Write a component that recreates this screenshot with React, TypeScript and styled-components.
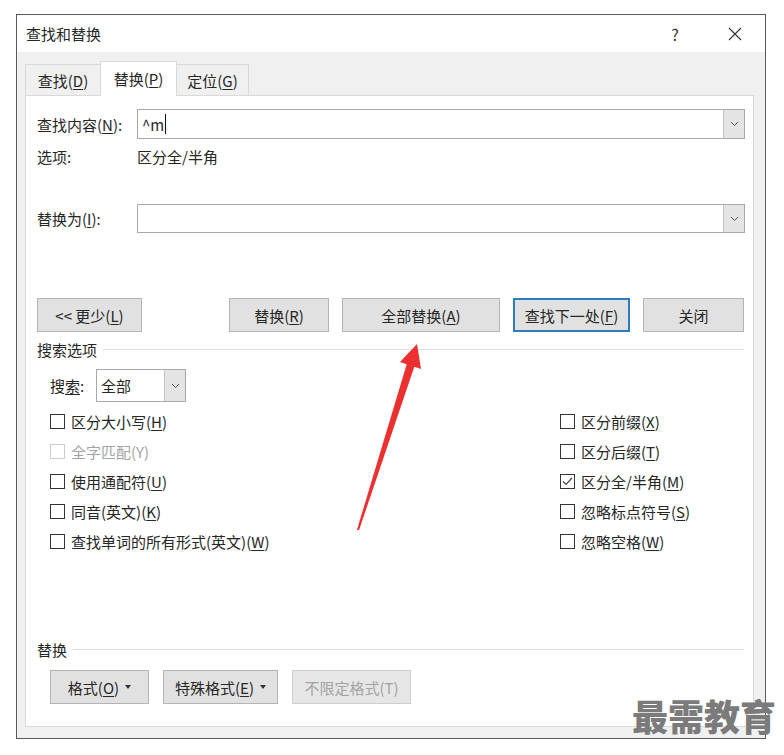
import React from "react";
import styled, { createGlobalStyle } from "styled-components";

const GlobalStyle = createGlobalStyle`
  html, body {
    margin: 0;
    padding: 0;
    background: #ffffff;
  }
  body {
    font-family: "Noto Sans CJK SC", "Noto Sans", sans-serif;
    color: #262626;
    font-size: 15px;
  }
  u {
    text-underline-offset: 2px;
  }
`;

const Page = styled.div`
  position: relative;
  width: 784px;
  height: 755px;
  overflow: hidden;
  padding: 14px 0 0 16px;
  box-sizing: border-box;
`;

const Dialog = styled.div`
  width: 750px;
  height: 725px;
  box-sizing: border-box;
  border: 1px solid #5a5a5a;
  background: #f0f0f0;
  display: flex;
  flex-direction: column;
`;

const TitleBar = styled.div`
  height: 37px;
  background: #ffffff;
  display: flex;
  align-items: center;
  padding: 0 0 0 9px;
  flex-shrink: 0;
`;

const Title = styled.div`
  flex: 1;
`;

const TitleButton = styled.div<{ width: number }>`
  width: ${(p) => p.width}px;
  display: flex;
  justify-content: center;
  align-items: center;
  font-size: 16px;
  color: #333;
`;

const Body = styled.div`
  flex: 1;
  display: flex;
  flex-direction: column;
  padding: 10px 11px 11px 8px;
`;

const Tabs = styled.div`
  display: flex;
  align-items: flex-end;
  height: 34px;
  margin-bottom: -1px;
  position: relative;
  z-index: 1;
`;

const Tab = styled.div<{ active?: boolean; width: number }>`
  width: ${(p) => p.width}px;
  height: ${(p) => (p.active ? 35 : 32)}px;
  box-sizing: border-box;
  display: flex;
  align-items: center;
  justify-content: center;
  white-space: nowrap;
  background: ${(p) => (p.active ? "#ffffff" : "#f0f0f0")};
  border: 1px solid #d9d9d9;
  border-bottom-color: ${(p) => (p.active ? "#ffffff" : "#d9d9d9")};
  & + & {
    margin-left: -1px;
  }
`;

const Panel = styled.div`
  flex: 1;
  background: #ffffff;
  border: 1px solid #d9d9d9;
  padding: 0 8px 0 11px;
  display: flex;
  flex-direction: column;
`;

const FieldRow = styled.div<{ top: number }>`
  margin-top: ${(p) => p.top}px;
  display: flex;
  align-items: center;
`;

const FieldLabel = styled.div<{ width: number }>`
  width: ${(p) => p.width}px;
  flex-shrink: 0;
  white-space: nowrap;
`;

const Combo = styled.div<{ width?: number; height: number }>`
  ${(p) => (p.width ? `width: ${p.width}px;` : "flex: 1;")}
  height: ${(p) => p.height}px;
  box-sizing: border-box;
  border: 1px solid #a9a9a9;
  background: #ffffff;
  display: flex;
  align-items: stretch;
`;

const ComboText = styled.div`
  flex: 1;
  display: flex;
  align-items: center;
  padding-left: 4px;
`;

const Caret = styled.span`
  display: inline-block;
  width: 1px;
  height: 20px;
  background: #111;
  margin-left: 1px;
`;

const ComboButton = styled.div`
  width: 20px;
  background: #e4e4e4;
  border-left: 1px solid #c4c4c4;
  display: flex;
  align-items: center;
  justify-content: center;
`;

const OptionsRow = styled.div`
  margin-top: 7px;
  height: 20px;
  display: flex;
  align-items: center;
`;

const ButtonRow = styled.div`
  margin-top: 65px;
  display: flex;
  justify-content: space-between;
  padding-right: 1px;
`;

const ButtonGroup = styled.div<{ gap: number }>`
  display: flex;
  gap: ${(p) => p.gap}px;
`;

const Button = styled.div<{ width: number; primary?: boolean; disabled?: boolean }>`
  width: ${(p) => p.width}px;
  height: 34px;
  box-sizing: border-box;
  background: ${(p) => (p.disabled ? "#e6e6e6" : "#e1e1e1")};
  border: ${(p) =>
    p.primary ? "2px solid #2f7db8" : p.disabled ? "1px solid #cfcfcf" : "1px solid #b4b4b4"};
  color: ${(p) => (p.disabled ? "#a3a3a3" : "#262626")};
  display: flex;
  align-items: center;
  justify-content: center;
  gap: 6px;
  white-space: nowrap;
`;

const DropTriangle = styled.span`
  width: 0;
  height: 0;
  border-left: 3.5px solid transparent;
  border-right: 3.5px solid transparent;
  border-top: 4px solid #333;
`;

const SectionHeading = styled.div<{ top: number }>`
  margin-top: ${(p) => p.top}px;
  height: 20px;
  display: flex;
  align-items: center;
  gap: 6px;
  padding-right: 1px;
`;

const HeadingLine = styled.div`
  flex: 1;
  height: 1px;
  background: #dedede;
`;

const Indented = styled.div<{ top: number }>`
  margin-top: ${(p) => p.top}px;
  padding-left: 13px;
  display: flex;
  align-items: center;
`;

const CheckGrid = styled.div`
  margin-top: 4px;
  padding-left: 13px;
  display: grid;
  grid-template-columns: 510px 1fr;
`;

const CheckColumn = styled.div`
  display: flex;
  flex-direction: column;
`;

const CheckRow = styled.div<{ disabled?: boolean }>`
  height: 30px;
  display: flex;
  align-items: center;
  gap: 6px;
  white-space: nowrap;
  color: ${(p) => (p.disabled ? "#a3a3a3" : "#262626")};
`;

const Box = styled.div<{ disabled?: boolean }>`
  width: 15px;
  height: 15px;
  box-sizing: border-box;
  border: 1px solid ${(p) => (p.disabled ? "#cccccc" : "#333333")};
  background: #ffffff;
  display: flex;
  align-items: center;
  justify-content: center;
`;

const BottomButtons = styled.div`
  margin-top: 11px;
  padding-left: 13px;
  display: flex;
  gap: 14px;
`;

const Overlay = styled.svg`
  position: absolute;
  left: 0;
  top: 0;
  pointer-events: none;
`;

const Watermark = styled.div`
  position: absolute;
  left: 632px;
  top: 693px;
  font-size: 36px;
  font-weight: 900;
  color: #7b7b7b;
  line-height: 44px;
  pointer-events: none;
`;

const Chevron = () => (
  <svg width="9" height="6" viewBox="0 0 9 6">
    <path d="M1 1 L4.5 4.5 L8 1" fill="none" stroke="#555" strokeWidth="1" />
  </svg>
);

const Check = ({ checked, disabled }: { checked?: boolean; disabled?: boolean }) => (
  <Box disabled={disabled}>
    {checked && (
      <svg width="11" height="9" viewBox="0 0 11 9">
        <path d="M1 4.5 L4 7.5 L10 1" fill="none" stroke="#444" strokeWidth="1.2" />
      </svg>
    )}
  </Box>
);

type Opt = { label: React.ReactNode; checked?: boolean; disabled?: boolean };

const leftOptions: Opt[] = [
  { label: <>区分大小写(<u>H</u>)</> },
  { label: <>全字匹配(Y)</>, disabled: true },
  { label: <>使用通配符(<u>U</u>)</> },
  { label: <>同音(英文)(<u>K</u>)</> },
  { label: <>查找单词的所有形式(英文)(<u>W</u>)</> },
];

const rightOptions: Opt[] = [
  { label: <>区分前缀(<u>X</u>)</> },
  { label: <>区分后缀(<u>T</u>)</> },
  { label: <>区分全/半角(<u>M</u>)</>, checked: true },
  { label: <>忽略标点符号(<u>S</u>)</> },
  { label: <>忽略空格(<u>W</u>)</> },
];

const renderOptions = (opts: Opt[]) =>
  opts.map((o, i) => (
    <CheckRow key={i} disabled={o.disabled}>
      <Check checked={o.checked} disabled={o.disabled} />
      <span>{o.label}</span>
    </CheckRow>
  ));

const App: React.FC = () => {
  return (
    <>
      <GlobalStyle />
      <Page>
        <Dialog>
          <TitleBar>
            <Title>查找和替换</Title>
            <TitleButton width={60}>?</TitleButton>
            <TitleButton width={60}>
              <svg width="14" height="14" viewBox="0 0 14 14">
                <path d="M1 1 L13 13 M13 1 L1 13" stroke="#333" strokeWidth="1.1" />
              </svg>
            </TitleButton>
          </TitleBar>
          <Body>
            <Tabs>
              <Tab width={76}>
                <span>
                  查找(<u>D</u>)
                </span>
              </Tab>
              <Tab width={77} active>
                <span>
                  替换(<u>P</u>)
                </span>
              </Tab>
              <Tab width={73}>
                <span>
                  定位(<u>G</u>)
                </span>
              </Tab>
            </Tabs>
            <Panel>
              <FieldRow top={13}>
                <FieldLabel width={100}>
                  查找内容(<u>N</u>):
                </FieldLabel>
                <Combo height={30}>
                  <ComboText>
                    ^m
                    <Caret />
                  </ComboText>
                  <ComboButton>
                    <Chevron />
                  </ComboButton>
                </Combo>
              </FieldRow>
              <OptionsRow>
                <FieldLabel width={100}>选项:</FieldLabel>
                <span>区分全/半角</span>
              </OptionsRow>
              <FieldRow top={38}>
                <FieldLabel width={100}>
                  替换为(<u>I</u>):
                </FieldLabel>
                <Combo height={29}>
                  <ComboText />
                  <ComboButton>
                    <Chevron />
                  </ComboButton>
                </Combo>
              </FieldRow>
              <ButtonRow>
                <Button width={105}>
                  <span>
                    &lt;&lt; 更少(<u>L</u>)
                  </span>
                </Button>
                <ButtonGroup gap={13}>
                  <Button width={100}>
                    <span>
                      替换(<u>R</u>)
                    </span>
                  </Button>
                  <Button width={158}>
                    <span>
                      全部替换(<u>A</u>)
                    </span>
                  </Button>
                  <Button width={117} primary>
                    <span>
                      查找下一处(<u>F</u>)
                    </span>
                  </Button>
                  <Button width={101}>
                    <span>关闭</span>
                  </Button>
                </ButtonGroup>
              </ButtonRow>
              <SectionHeading top={7}>
                <span>搜索选项</span>
                <HeadingLine />
              </SectionHeading>
              <Indented top={10}>
                <FieldLabel width={46}>
                  搜<u>索</u>:
                </FieldLabel>
                <Combo width={90} height={33}>
                  <ComboText>全部</ComboText>
                  <ComboButton>
                    <Chevron />
                  </ComboButton>
                </Combo>
              </Indented>
              <CheckGrid>
                <CheckColumn>{renderOptions(leftOptions)}</CheckColumn>
                <CheckColumn>{renderOptions(rightOptions)}</CheckColumn>
              </CheckGrid>
              <SectionHeading top={83}>
                <span>替换</span>
                <HeadingLine />
              </SectionHeading>
              <BottomButtons>
                <Button width={99}>
                  <span>
                    格式(<u>O</u>)
                  </span>
                  <DropTriangle />
                </Button>
                <Button width={115}>
                  <span>
                    特殊格式(<u>E</u>)
                  </span>
                  <DropTriangle />
                </Button>
                <Button width={119} disabled>
                  <span>不限定格式(T)</span>
                </Button>
              </BottomButtons>
            </Panel>
          </Body>
        </Dialog>
        <Overlay width="784" height="755" viewBox="0 0 784 755">
          <polygon
            points="417,344 421,369 414.3,366.7 359,530.3 357,529.7 406.7,364.3 400,362"
            fill="#ec3030"
          />
        </Overlay>
        <Watermark>最需教育</Watermark>
      </Page>
    </>
  );
};

export default App;
